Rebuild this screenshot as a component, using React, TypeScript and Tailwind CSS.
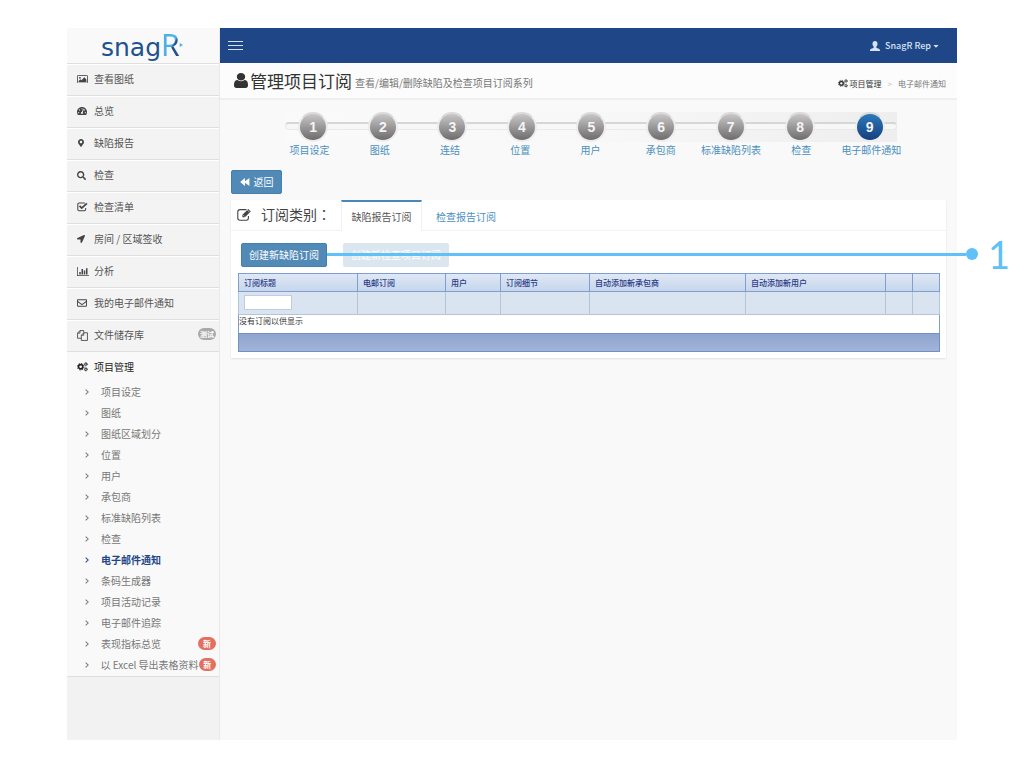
import type { ReactNode } from "react";
import { FaTachometerAlt, FaMapMarkerAlt, FaSearch, FaLocationArrow, FaRegEnvelope, FaCaretDown } from "react-icons/fa";

function PictureIcon() {
  return (
    <svg viewBox="0 0 15 12" className="w-[11px]" fill="currentColor">
      <rect x="0.6" y="0.6" width="13.8" height="10.8" rx="1" fill="none" stroke="currentColor" strokeWidth="1.2" />
      <circle cx="4" cy="3.9" r="1.3" />
      <path d="M2.2 9.8V8.2L4.6 5.8 6 7.2l4-4 2.8 2.8v3.8z" />
    </svg>
  );
}

function CheckSquareIcon() {
  return (
    <svg viewBox="0 0 14 12" className="w-[11px]" fill="none" stroke="currentColor">
      <path d="M10 1.2H2.6A1.6 1.6 0 0 0 1 2.8v6.6A1.6 1.6 0 0 0 2.6 11h6.8A1.6 1.6 0 0 0 11 9.400V7.600" strokeWidth="1.3" />
      <path d="M3.200 5l2.800 2.800L12.600 1.800" strokeWidth="2.200" />
    </svg>
  );
}

function BarChartIcon() {
  return (
    <svg viewBox="0 0 16 12" className="w-3" fill="currentColor">
      <path d="M0 0h1v11h15v1H0z" />
      <path d="M3 6.500h2V10H3zM6 2.500h2V10H6zM9 4.500h2V10H9zM12 1.500h2V10h-2z" />
    </svg>
  );
}

function FilesIcon() {
  return (
    <svg viewBox="0 0 14 14" className="w-[11px]" fill="none" stroke="currentColor" strokeWidth="1.100" strokeLinejoin="round">
      <path d="M5.500 10.500H.7V4L3.800.7h4.700v2.600M3.800.7V4H.7" />
      <path d="M8.600 3.500h4.700v9.800H5.500V6.700zM8.600 3.500v3.200H5.500" />
    </svg>
  );
}

function CogsIcon({ className }: { className: string }) {
  return (
    <svg viewBox="0 0 15 13" className={className} fill="none" stroke="currentColor">
      <circle cx="5" cy="6.500" r="2.900" strokeWidth="2.200" />
      <circle cx="5" cy="6.500" r="4.500" strokeWidth="1.300" strokeDasharray="1.770 1.770" />
      <circle cx="12" cy="3" r="1.500" strokeWidth="1.300" />
      <circle cx="12" cy="3" r="2.400" strokeWidth="0.800" strokeDasharray="1.250 1.250" />
      <circle cx="12" cy="10" r="1.500" strokeWidth="1.300" />
      <circle cx="12" cy="10" r="2.400" strokeWidth="0.800" strokeDasharray="1.250 1.250" />
    </svg>
  );
}

function EditIcon() {
  return (
    <svg viewBox="0 0 15 13" className="mr-[9px] w-[15px] shrink-0" fill="none" stroke="currentColor">
      <path
        d="M9.500 1.600H3A2.200 2.200 0 0 0 .8 3.800V10A2.200 2.200 0 0 0 3 12.200h6.200A2.200 2.200 0 0 0 11.400 10V8"
        strokeWidth="1.100"
      />
      <path d="M5.400 9.300V6.800L11.300.9l2.500 2.500-5.900 5.900z" fill="currentColor" stroke="none" />
      <path d="M6.300 7.200l1.200 1.200" stroke="white" strokeWidth="0.700" />
      <path d="M10.200 1.900l2.600 2.600" stroke="white" strokeWidth="0.600" />
    </svg>
  );
}

function UserIcon() {
  return (
    <svg viewBox="0 128 1280 1536" preserveAspectRatio="none" className="h-[15px] w-[14px]" fill="currentColor">
      <path d="M1280 1399q0 109-62.500 187t-150.500 78h-854q-88 0-150.500-78t-62.500-187q0-85 8.500-160.500t31.500-152 58.500-131 94-89 134.500-34.500q131 128 313 128t313-128q76 0 134.500 34.500t94 89 58.500 131 31.500 152 8.500 160.500zm-256-887q0 159-112.500 271.500t-271.500 112.500-271.500-112.500-112.500-271.500 112.500-271.500 271.500-112.500 271.500 112.500 112.500 271.500z" />
    </svg>
  );
}

function PersonIcon() {
  return (
    <svg viewBox="0 0 20 20" className="size-[10px]" fill="currentColor">
      <path d="M10 0C7 0 5 2 5 5.400c0 2.600 1 4.800 2.500 6v1.800c-.3.800-1.500 1.200-3.500 2C1.500 16.200 0 17 0 18.500V20h20v-1.500c0-1.500-1.500-2.300-4-3.300-2-.8-3.200-1.200-3.500-2v-1.800c1.500-1.200 2.500-3.400 2.500-6C15 2 13 0 10 0z" />
    </svg>
  );
}

function RewindIcon() {
  return (
    <svg viewBox="0 0 12 10" className="h-2 w-[10px]" fill="currentColor">
      <path d="M6 0v4.200L11.500 0v10L6 5.800V10L0 5z" />
    </svg>
  );
}

function ChevronIcon() {
  return (
    <svg viewBox="0 0 5 8" className="h-[6px] w-1" fill="none" stroke="currentColor" strokeWidth="1.400">
      <path d="M.7.7 4 4 .7 7.300" />
    </svg>
  );
}

const menu: { label: string; icon: ReactNode; badge?: string }[] = [
  { label: "查看图纸", icon: <PictureIcon /> },
  { label: "总览", icon: <FaTachometerAlt className="size-[10px]" /> },
  { label: "缺陷报告", icon: <FaMapMarkerAlt className="size-2" /> },
  { label: "检查", icon: <FaSearch className="size-[9px]" /> },
  { label: "检查清单", icon: <CheckSquareIcon /> },
  { label: "房间 / 区域签收", icon: <FaLocationArrow className="size-2" /> },
  { label: "分析", icon: <BarChartIcon /> },
  { label: "我的电子邮件通知", icon: <FaRegEnvelope className="size-[10px]" /> },
  { label: "文件储存库", icon: <FilesIcon />, badge: "测试" },
];

const subMenu: { label: string; active?: boolean; badge?: string }[] = [
  { label: "项目设定" },
  { label: "图纸" },
  { label: "图纸区域划分" },
  { label: "位置" },
  { label: "用户" },
  { label: "承包商" },
  { label: "标准缺陷列表" },
  { label: "检查" },
  { label: "电子邮件通知", active: true },
  { label: "条码生成器" },
  { label: "项目活动记录" },
  { label: "电子邮件追踪" },
  { label: "表现指标总览", badge: "新" },
  { label: "以 Excel 导出表格资料", badge: "新" },
];

const steps = ["项目设定", "图纸", "连结", "位置", "用户", "承包商", "标准缺陷列表", "检查", "电子邮件通知"];

const columns = ["订阅标题", "电邮订阅", "用户", "订阅细节", "自动添加新承包商", "自动添加新用户", "", ""];

function Sidebar() {
  return (
    <aside className="w-[153px] shrink-0 border-r border-[#e9e9e9] bg-[#f2f2f2]">
      <a href="#" aria-label="snagR" className="flex h-[35px] items-baseline bg-[#f9f9f9] pl-[34px] leading-[33px]">
        <span className="font-['DejaVu_Sans'] text-[25px] text-[#20528f]">snag</span>
        <span className="bg-linear-to-br from-[#4fb0e4] from-55% to-[#20528f] to-60% bg-clip-text font-['Noto_Sans'] text-[30px] text-transparent">
          R
        </span>
        <svg viewBox="0 0 6 8" className="-ml-px h-[6px] w-1 -translate-y-2 fill-[#4fb0e4]">
          <path d="M1 1l5 3-5 3z" />
        </svg>
      </a>
      <nav>
        <ul>
          {menu.map((m) => (
            <li key={m.label} className="h-8 border-t border-[#dfdfdf]">
              <a
                href="#"
                className="flex h-full items-center border-t border-white bg-[#f3f3f3] pr-[3px] pb-[2px] pl-[10px] text-[#555]"
              >
                <span className="flex w-[17px] items-center text-[#444]">{m.icon}</span>
                <span className="flex-1">{m.label}</span>
                {m.badge && (
                  <span className="mb-[2px] flex h-3 w-[18px] items-center justify-center rounded-full bg-[#a9a9a9] text-[7px] font-bold text-white">
                    {m.badge}
                  </span>
                )}
              </a>
            </li>
          ))}
          <li className="border-y border-[#dfdfdf] bg-[#f9f9f9]">
            <a href="#" className="flex h-[30px] items-center pl-[10px] text-[#222]">
              <span className="w-[17px]">
                <CogsIcon className="w-[11px]" />
              </span>
              项目管理
            </a>
            <ul>
              {subMenu.map((s) => (
                <li key={s.label}>
                  <a
                    href="#"
                    className={`flex h-[21px] items-center pr-[3px] pb-px pl-[18px] ${s.active ? "font-bold text-[#1f4788]" : "text-[#777]"}`}
                  >
                    <span className="w-4">
                      <ChevronIcon />
                    </span>
                    <span className="flex-1 whitespace-nowrap">{s.label}</span>
                    {s.badge && (
                      <span className="mb-px flex h-[13px] w-[18px] items-center justify-center rounded-full bg-[#e27060] text-[8px] font-bold text-white">
                        {s.badge}
                      </span>
                    )}
                  </a>
                </li>
              ))}
            </ul>
          </li>
        </ul>
      </nav>
    </aside>
  );
}

function Steps() {
  return (
    <div className="flex flex-col items-center pt-3 pl-1">
      <div className="relative h-[30px] w-[612px] max-w-full bg-linear-to-r from-[#fafafa] via-[#f8f8f8] to-[#eeeeee]">
        <div className="absolute inset-x-0 top-[10px] h-2 rounded-full border border-t-2 border-[#e9e9e9] border-t-[#d6d6d6] bg-[#f7f7f7]" />
        <ol className="relative -mr-2 -ml-[6px] grid grid-cols-9">
          {steps.map((s, i) => (
            <li key={s} className="flex justify-center">
              <a
                href="#"
                aria-label={s}
                className={`flex size-[30px] items-center justify-center rounded-full border-2 border-[#ececec] border-t-[#dadada] font-['Liberation_Sans'] text-sm font-bold text-[#f4f4f4] ${
                  i === 8 ? "bg-linear-to-b from-[#2d79b8] to-[#173f80]" : "bg-linear-to-b from-[#c9c7c8] to-[#6f6c6d]"
                }`}
              >
                {i + 1}
              </a>
            </li>
          ))}
        </ol>
      </div>
      <ol className="grid w-[632px] max-w-full grid-cols-9 text-[#4a8fc0]">
        {steps.map((s) => (
          <li key={s} className="text-center whitespace-nowrap">
            <a href="#">{s}</a>
          </li>
        ))}
      </ol>
    </div>
  );
}

function SubscriptionTable() {
  return (
    <table className="w-full table-fixed border-collapse border border-[#7f9ccb] text-[8px] leading-3">
      <colgroup>
        <col className="w-[119px]" />
        <col className="w-[88px]" />
        <col className="w-[55px]" />
        <col className="w-[89px]" />
        <col className="w-[156px]" />
        <col className="w-[140px]" />
        <col className="w-[27px]" />
        <col className="w-[27px]" />
      </colgroup>
      <thead>
        <tr className="h-[18px] bg-linear-to-b from-[#dfe8f5] to-[#c5d5ec]">
          {columns.map((c, i) => (
            <th key={i} className="border border-[#7f9fd0] px-[5px] text-left font-medium text-[#2b3a87]">
              {c}
            </th>
          ))}
        </tr>
        <tr className="h-[23px] bg-[#d9e4f0]">
          {columns.map((c, i) => (
            <td key={i} className="border border-[#b3c4dd] px-[5px] pb-[2px]">
              {i === 0 && (
                <input aria-label={c} className="block h-[15px] w-12 border border-[#bfcde0] bg-white px-1 outline-none" />
              )}
            </td>
          ))}
        </tr>
      </thead>
      <tbody>
        <tr className="h-[18px]">
          <td colSpan={8} className="pb-[6px] text-[#333]">
            没有订阅以供显示
          </td>
        </tr>
      </tbody>
      <tfoot>
        <tr className="h-[18px] bg-linear-to-b from-[#8fa5cf] to-[#a3b4d9]">
          <td colSpan={8} className="border border-[#7390c3] p-0" />
        </tr>
      </tfoot>
    </table>
  );
}

export default function App() {
  return (
    <div className="relative flex min-h-screen bg-white px-[67px] py-7 font-['Noto_Sans_CJK_SC',sans-serif] text-[10px] leading-4">
      <Sidebar />
      <div className="min-w-0 flex-1 bg-[#f9f9f9]">
        <header className="flex h-[35px] items-center justify-between bg-[#1f4788] pr-[17px] pl-2 text-[#d5e2f2]">
          <button type="button" aria-label="菜单" className="flex w-[15px] flex-col gap-[3px]">
            <span className="h-px bg-current" />
            <span className="h-px bg-current" />
            <span className="h-px bg-current" />
          </button>
          <button type="button" className="flex items-center text-[9px] font-medium">
            <PersonIcon />
            <span className="ml-[5px]">SnagR Rep</span>
            <FaCaretDown className="ml-px size-2" />
          </button>
        </header>

        <div className="flex h-[37px] items-center justify-between border-b-2 border-[#efefef] bg-[#fcfcfc] pr-[11px] pl-[14px]">
          <h1 className="flex items-center text-[17px] text-[#333]">
            <UserIcon />
            <span className="ml-[2px]">管理项目订阅</span>
            <small className="mt-1 ml-[3px] text-[10px] text-[#777]">查看/编辑/删除缺陷及检查项目订阅系列</small>
          </h1>
          <nav aria-label="路径" className="mt-[6px] flex items-center text-[8px]">
            <a href="#" className="flex items-center gap-[2px] text-[#333]">
              <CogsIcon className="w-[10px]" />
              项目管理
            </a>
            <span className="mx-[6px] text-[#bbb]">&gt;</span>
            <span className="text-[#777]">电子邮件通知</span>
          </nav>
        </div>

        <Steps />

        <main className="px-[11px] pt-3">
          <a
            href="#"
            className="flex h-6 w-[51px] items-center justify-center gap-1 rounded-xs border border-[#457fae] bg-[#528ab7] text-white"
          >
            <RewindIcon />
            返回
          </a>

          <section className="mt-[6px] bg-white shadow-[0_1px_2px_rgba(0,0,0,0.1)]">
            <div className="flex h-[31px] border-b border-[#f2f2f2]">
              <h2 className="flex w-[110px] items-center pb-[2px] pl-[6px] text-sm whitespace-nowrap text-[#444]">
                <EditIcon />
                订阅类别
                <span className="font-['Noto_Sans_CJK_TC',sans-serif]" lang="zh-Hant">
                  ：
                </span>
              </h2>
              <div role="tablist" className="flex">
                <button
                  type="button"
                  role="tab"
                  aria-selected="true"
                  className="-mb-px w-[81px] border-x border-t-2 border-[#f2f2f2] border-t-[#4a86b8] bg-white text-[#555]"
                >
                  缺陷报告订阅
                </button>
                <button type="button" role="tab" aria-selected="false" className="px-[14px] pt-[3px] text-[#4a8fc0]">
                  检查报告订阅
                </button>
              </div>
            </div>
            <div className="px-[7px] pt-3 pb-[6px]">
              <div className="mb-[6px] flex gap-4 pl-[3px]">
                <button type="button" className="h-6 w-[86px] rounded-xs border border-[#457fae] bg-[#528ab7] text-white">
                  创建新缺陷订阅
                </button>
                <button type="button" disabled className="h-6 w-[106px] rounded-xs bg-[#dbe6ef] text-white">
                  创建新检查项目订阅
                </button>
              </div>
              <SubscriptionTable />
            </div>
          </section>
        </main>
      </div>

      <div className="pointer-events-none absolute top-[234px] right-[14px] left-[327px] flex h-10 items-center text-[#5fc1f8]">
        <span className="h-[3px] flex-1 bg-current" />
        <span className="size-3 rounded-full bg-current" />
        <span className="ml-[10px] font-[Lato] text-[38px] leading-none">1</span>
      </div>
    </div>
  );
}
